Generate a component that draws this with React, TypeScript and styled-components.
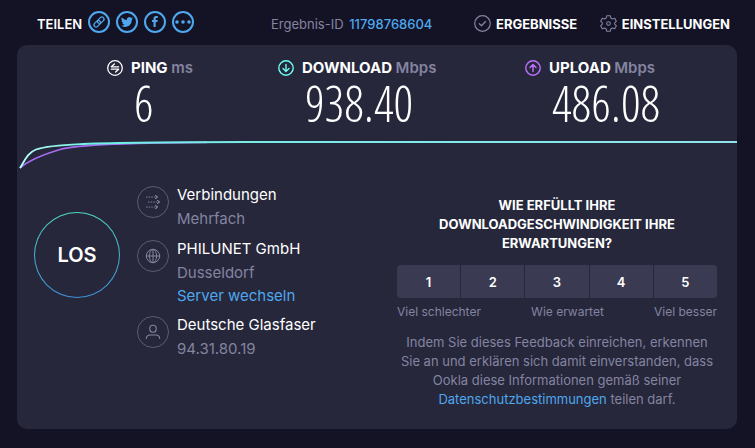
import React from "react";
import styled, { createGlobalStyle } from "styled-components";

const color = {
  page: "#141326",
  card: "#26273b",
  cell: "#3a3a52",
  muted: "#8484a0",
  link: "#4fa8ee",
  download: "#6afff3",
  upload: "#bf71ff",
};

const GlobalStyle = createGlobalStyle`
  *, *::before, *::after { box-sizing: border-box; }
  body {
    margin: 0;
    background: ${color.page};
    color: #fff;
    font-family: Inter, "Open Sans", sans-serif;
  }
  h2, p, ul, dl, dd { margin: 0; padding: 0; }
  button { font-family: inherit; cursor: pointer; }
  svg { display: block; flex: none; }
`;

const Page = styled.div`
  padding: 0 18px 19px 17px;
`;

const Header = styled.header`
  display: grid;
  grid-template-columns: 254fr 203fr 256fr;
  align-items: center;
  height: 45px;
  padding: 2px 7px 0 0;
`;

const Share = styled.div`
  display: flex;
  align-items: center;
  gap: 6px;
  height: 40px;
  padding: 0 0 4px 20px;
`;

const ShareLabel = styled.span`
  font-size: 13px;
  font-weight: 600;
  line-height: 20px;
  padding-top: 4px;
`;

const RoundLink = styled.a`
  display: grid;
  place-items: center;
  width: 22px;
  height: 22px;
  border: 2px solid ${color.link};
  border-radius: 50%;
  color: ${color.link};
`;

const ResultId = styled.p`
  font-size: 13px;
  line-height: 20px;
  color: ${color.muted};
  white-space: nowrap;
`;

const Link = styled.a`
  color: ${color.link};
  text-decoration: none;
`;

const IdLink = styled(Link)`
  font-weight: 500;
  margin-left: 2px;
`;

const Nav = styled.nav`
  display: flex;
  justify-content: space-between;
`;

const NavLink = styled.a`
  display: flex;
  align-items: center;
  gap: 5px;
  color: #fff;
  font-size: 13px;
  font-weight: 700;
  line-height: 20px;
  text-decoration: none;

  svg { color: ${color.muted}; }
`;

const Card = styled.main`
  border-radius: 10px;
  background: ${color.card};
  overflow: hidden;
`;

const Metrics = styled.dl`
  display: grid;
  grid-template-columns: 171fr 247fr 212fr;
  padding: 12px 0 0 12.5%;
`;

const MetricName = styled.dt`
  display: flex;
  align-items: center;
  gap: 8px;
  font-size: 15px;
  font-weight: 700;
  line-height: 22px;
  white-space: nowrap;
`;

const Unit = styled.span`
  color: ${color.muted};
  font-weight: 600;
`;

const MetricValue = styled.dd`
  && { padding-left: 27px; }
  font-family: "Open Sans Condensed Light", "Open Sans Condensed", "Roboto Condensed", sans-serif;
  font-size: 49px;
  font-weight: 300;
  line-height: 48px;
`;

const Graph = styled.svg`
  width: 100%;
  height: 48px;
`;

const Body = styled.div`
  display: grid;
  grid-template-columns: 103fr 260fr 320fr;
  padding: 8px 20px 20px 17px;
`;

const GoButton = styled.button`
  width: 86px;
  height: 86px;
  margin-top: 29px;
  border: 1px solid transparent;
  border-radius: 50%;
  background:
    linear-gradient(${color.card}, ${color.card}) padding-box,
    linear-gradient(#4fd8c4, #3f8fd8) border-box;
  color: #fff;
  font-size: 20px;
  font-weight: 600;
`;

const Details = styled.ul`
  display: flex;
  flex-direction: column;
  gap: 6px;
  list-style: none;
`;

const Detail = styled.li`
  display: flex;
  gap: 8px;
`;

const DetailIcon = styled.span`
  display: grid;
  place-items: center;
  flex: none;
  width: 32px;
  height: 32px;
  margin-top: 3px;
  border: 1px solid #5c5c76;
  border-radius: 50%;
  color: ${color.muted};
`;

const DetailText = styled.div`
  display: flex;
  flex-direction: column;
  font-size: 15px;
  line-height: 24px;
  white-space: nowrap;
`;

const Muted = styled.span`
  color: ${color.muted};
`;

const ServerLink = styled(Link)`
  line-height: 22px;
`;

const Survey = styled.section`
  padding-top: 13px;
  text-align: center;
`;

const Question = styled.h2`
  padding: 0 24px;
  font-size: 13px;
  font-weight: 700;
  line-height: 19px;
  text-transform: uppercase;
`;

const Scale = styled.div`
  display: grid;
  grid-template-columns: repeat(5, 1fr);
  gap: 1px;
  margin-top: 12px;
  border-radius: 4px;
  overflow: hidden;
`;

const ScaleButton = styled.button`
  height: 33px;
  padding: 0;
  border: 0;
  background: ${color.cell};
  color: #fff;
  font-size: 13px;
  font-weight: 600;
`;

const ScaleLabels = styled.div`
  display: flex;
  justify-content: space-between;
  padding-top: 6px;
  color: ${color.muted};
  font-size: 12px;
  line-height: 16px;
`;

const Consent = styled.p`
  padding-top: 13px;
  color: ${color.muted};
  font-size: 13px;
  line-height: 19px;
`;

const line = { fill: "none", stroke: "currentColor", strokeLinecap: "round", strokeLinejoin: "round" } as const;

const ChainIcon = () => (
  <svg width="14" height="14" viewBox="0 0 14 14" {...line} strokeWidth="1.3">
    <g transform="rotate(-45 7 7)">
      <rect x="0.8" y="4.9" width="7.4" height="4.2" rx="2.1" />
      <rect x="5.8" y="4.9" width="7.4" height="4.2" rx="2.1" />
    </g>
  </svg>
);

const BirdIcon = () => (
  <svg width="12" height="12" viewBox="0 0 24 24" fill="currentColor">
    <path d="M23.95 4.57a10 10 0 0 1-2.82.77 4.96 4.96 0 0 0 2.16-2.72 9.9 9.9 0 0 1-3.12 1.19 4.92 4.92 0 0 0-8.38 4.48A13.93 13.93 0 0 1 1.64 3.16a4.92 4.92 0 0 0 1.52 6.57 4.9 4.9 0 0 1-2.23-.61v.06a4.92 4.92 0 0 0 3.95 4.83 5 5 0 0 1-2.21.08 4.94 4.94 0 0 0 4.6 3.42A9.87 9.87 0 0 1 0 19.54a13.99 13.99 0 0 0 7.55 2.21c9.05 0 14-7.5 14-13.98 0-.21 0-.42-.02-.63a9.94 9.94 0 0 0 2.46-2.55z" />
  </svg>
);

const FacebookIcon = () => (
  <svg width="6" height="11" viewBox="0 0 6 11" fill="currentColor">
    <path d="M1.5 11V6H0V4.1h1.5V2.7C1.5 1 2.5 0 4.1 0c.8 0 1.5.1 1.7.1v1.8H4.7c-.9 0-1 .4-1 1v1.2h2L5.4 6H3.7v5z" />
  </svg>
);

const MoreIcon = () => (
  <svg width="16" height="4" viewBox="0 0 16 4" fill="currentColor">
    <circle cx="2" cy="2" r="1.8" />
    <circle cx="8" cy="2" r="1.8" />
    <circle cx="14" cy="2" r="1.8" />
  </svg>
);

const CheckIcon = () => (
  <svg width="17" height="17" viewBox="0 0 17 17" {...line}>
    <circle cx="8.5" cy="8.5" r="7.8" strokeWidth="1.2" />
    <path d="M5.3 8.8l2.2 2 4-4.3" strokeWidth="1.3" />
  </svg>
);

const GearIcon = () => (
  <svg width="17" height="17" viewBox="0 0 24 24" {...line} strokeWidth="1.5">
    <path d="M9.6 1h4.8l.8 3.2 2.4 1.4 3.2-.9 2.3 4-2.4 2.3v2l2.4 2.3-2.3 4-3.2-.9-2.4 1.4-.8 3.2H9.6l-.8-3.2-2.4-1.4-3.2.9-2.3-4 2.4-2.3v-2L.9 8.7l2.3-4 3.2.9 2.4-1.4z" />
    <circle cx="12" cy="12" r="2.6" />
  </svg>
);

const PingIcon = () => (
  <svg width="16" height="16" viewBox="0 0 16 16" {...line} strokeWidth="1.3">
    <circle cx="8" cy="8" r="7.3" />
    <path d="M11.7 6.8H4.3L7.4 4M4.3 9.2h7.4L8.6 12" />
  </svg>
);

const ArrowIcon = ({ up = false }: { up?: boolean }) => (
  <svg width="16" height="16" viewBox="0 0 16 16" {...line} strokeWidth="1.4" stroke={up ? color.upload : color.download}>
    <circle cx="8" cy="8" r="7.2" />
    <path d={up ? "M8 11.5V4.7M5 7.5l3-3 3 3" : "M8 4.5v6.8M5 8.5l3 3 3-3"} />
  </svg>
);

const ConnectionsIcon = () => (
  <svg width="16" height="16" viewBox="0 0 16 16" {...line} strokeWidth="1.1">
    <path d="M1.5 3h8M3.5 8h8M1.5 13h8" strokeDasharray="0.6 2" />
    <path d="M10.5 1.5l2 1.5-2 1.5M12.5 6.5l2 1.5-2 1.5M10.5 11.5l2 1.5-2 1.5" />
  </svg>
);

const GlobeIcon = () => (
  <svg width="16" height="16" viewBox="0 0 16 16" {...line} strokeWidth="1">
    <circle cx="8" cy="8" r="6.7" />
    <ellipse cx="8" cy="8" rx="3.6" ry="6.7" />
    <path d="M1.3 8h13.4M8 1.3v13.4" />
  </svg>
);

const PersonIcon = () => (
  <svg width="16" height="16" viewBox="0 0 16 16" {...line} strokeWidth="1.1">
    <rect x="4.8" y="1.3" width="6.4" height="7" rx="3" />
    <path d="M1.3 14.5c.2-2.4 1.500-3.500 4-3.500h5.400c2.500 0 3.800 1.100 4 3.500" />
  </svg>
);

const shareTargets = [
  { label: "Link kopieren", icon: <ChainIcon /> },
  { label: "Twitter", icon: <BirdIcon /> },
  { label: "Facebook", icon: <FacebookIcon /> },
  { label: "Mehr", icon: <MoreIcon /> },
];

const metrics = [
  { name: "PING", unit: "ms", value: "6", icon: <PingIcon /> },
  { name: "DOWNLOAD", unit: "Mbps", value: "938.40", icon: <ArrowIcon /> },
  { name: "UPLOAD", unit: "Mbps", value: "486.08", icon: <ArrowIcon up /> },
];

const details = [
  { title: "Verbindungen", text: "Mehrfach", icon: <ConnectionsIcon /> },
  { title: "PHILUNET GmbH", text: "Dusseldorf", action: "Server wechseln", icon: <GlobeIcon /> },
  { title: "Deutsche Glasfaser", text: "94.31.80.19", icon: <PersonIcon /> },
];

export default function App() {
  return (
    <>
      <GlobalStyle />
      <Page>
        <Header>
          <Share>
            <ShareLabel>TEILEN</ShareLabel>
            {shareTargets.map((s) => (
              <RoundLink key={s.label} href="#" aria-label={s.label}>{s.icon}</RoundLink>
            ))}
          </Share>
          <ResultId>
            Ergebnis-ID <IdLink href="#">11798768604</IdLink>
          </ResultId>
          <Nav>
            <NavLink href="#"><CheckIcon />ERGEBNISSE</NavLink>
            <NavLink href="#"><GearIcon />EINSTELLUNGEN</NavLink>
          </Nav>
        </Header>

        <Card>
          <Metrics>
            {metrics.map((m) => (
              <div key={m.name}>
                <MetricName>
                  {m.icon}
                  <span>{m.name} <Unit>{m.unit}</Unit></span>
                </MetricName>
                <MetricValue>{m.value}</MetricValue>
              </div>
            ))}
          </Metrics>

          <Graph viewBox="0 0 720 48" preserveAspectRatio="none" fill="none" strokeWidth="1.8" aria-hidden="true">
            <defs>
              <linearGradient id="rise" gradientUnits="userSpaceOnUse" x1="0" x2="720" y1="0" y2="0">
                <stop offset="0" stopColor="#b9fff8" />
                <stop offset="0.1" stopColor="#6ff0e4" />
                <stop offset="1" stopColor="#8fe4ec" />
              </linearGradient>
            </defs>
            <path d="M3 41C12 33 28 27 43 22.5C56 19 76 18.2 100 17C130 16 160 15.5 190 15.3" stroke="#a56cf0" />
            <path d="M3 41C8 33 11 25.5 19 22.5C31 18.5 50 17.8 66 17C100 15.500 150 15 230 15H720" stroke="url(#rise)" />
          </Graph>

          <Body>
            <GoButton type="button">LOS</GoButton>
            <Details>
              {details.map((d) => (
                <Detail key={d.title}>
                  <DetailIcon>{d.icon}</DetailIcon>
                  <DetailText>
                    <span>{d.title}</span>
                    <Muted>{d.text}</Muted>
                    {d.action && <ServerLink href="#">{d.action}</ServerLink>}
                  </DetailText>
                </Detail>
              ))}
            </Details>
            <Survey>
              <Question id="question">Wie erfüllt Ihre Downloadgeschwindigkeit Ihre Erwartungen?</Question>
              <Scale role="group" aria-labelledby="question">
                {[1, 2, 3, 4, 5].map((n) => (
                  <ScaleButton key={n} type="button">{n}</ScaleButton>
                ))}
              </Scale>
              <ScaleLabels>
                <span>Viel schlechter</span>
                <span>Wie erwartet</span>
                <span>Viel besser</span>
              </ScaleLabels>
              <Consent>
                Indem Sie dieses Feedback einreichen, erkennen Sie an und erklären sich damit
                einverstanden, dass Ookla diese Informationen gemäß seiner{" "}
                <Link href="#">Datenschutzbestimmungen</Link> teilen darf.
              </Consent>
            </Survey>
          </Body>
        </Card>
      </Page>
    </>
  );
}
